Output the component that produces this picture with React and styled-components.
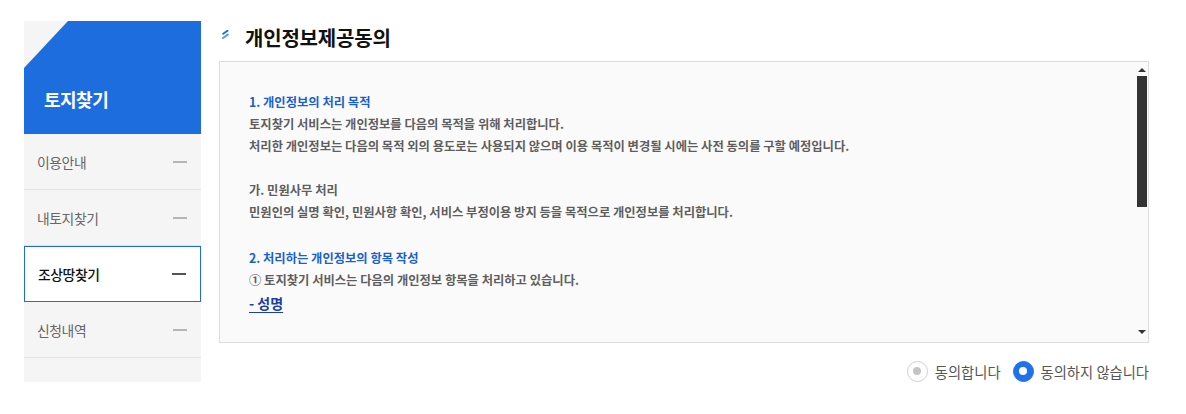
import React from "react";
import styled, { createGlobalStyle } from "styled-components";

const GlobalStyle = createGlobalStyle`
  * { box-sizing: border-box; }
  html, body { margin: 0; padding: 0; background: #fff; }
  body { font-family: "Noto Sans CJK KR", "Noto Sans", sans-serif; color: #555; }
`;

const Page = styled.div`
  display: flex;
  align-items: flex-start;
  gap: 18px;
  padding: 21px 0 0 24px;
  width: 1186px;
`;

const Sidebar = styled.nav`
  width: 177px;
  background: #f5f5f5;
  padding-bottom: 24px;
`;

const SideHeader = styled.div`
  height: 113px;
  background: #1e6ddf;
  clip-path: polygon(44px 0, 100% 0, 100% 100%, 0 100%, 0 47px);
  display: flex;
  align-items: flex-end;
  padding: 0 0 22px 20px;
  color: #fff;
  font-size: 18px;
  font-weight: 700;
  letter-spacing: -0.5px;
`;

const MenuList = styled.ul`
  list-style: none;
  margin: 0;
  padding: 0;
`;

const MenuItem = styled.li`
  height: 56px;
  display: flex;
  align-items: center;
  justify-content: space-between;
  padding: 0 14px 0 13px;
  font-size: 13.8px;
  letter-spacing: -0.4px;
  color: ${(p) => (p.$active ? "#111" : "#666")};
  font-weight: ${(p) => (p.$active ? 500 : 400)};
  background: ${(p) => (p.$active ? "#fff" : "transparent")};
  border: ${(p) => (p.$active ? "1px solid #1e6ddf" : "none")};
  border-bottom: ${(p) => (p.$active ? "1px solid #1e6ddf" : "1px solid #e3e3e3")};
`;

const Dash = styled.span`
  width: 14px;
  height: 2px;
  background: ${(p) => (p.$active ? "#555" : "#b5b5b5")};
`;

const Content = styled.section`
  width: 930px;
  display: flex;
  flex-direction: column;
`;

const TitleRow = styled.h2`
  margin: 0;
  height: 40px;
  display: flex;
  align-items: center;
  gap: 16px;
  padding: 0 0 7px 2px;
  font-size: 20px;
  font-weight: 700;
  color: #111;
  letter-spacing: -0.2px;
`;

const IconWrap = styled.span`
  display: flex;
  margin-bottom: 6px;
`;

const Box = styled.div`
  height: 282px;
  border: 1px solid #ddd;
  background: #fafafa;
  display: flex;
`;

const Viewport = styled.div`
  flex: 1;
  margin: 29px 0 0 29px;
  height: 226px;
  overflow: hidden;
`;

const Section = styled.div`
  margin-bottom: ${(p) => p.$gap || "22px"};
`;

const Heading = styled.p`
  margin: 0;
  line-height: 22px;
  font-size: 12.3px;
  font-weight: 700;
  color: #1a5fcc;
`;

const Line = styled.p`
  margin: 0;
  line-height: 22px;
  font-size: 12.3px;
  font-weight: 700;
  color: #5e5e5e;
`;

const ItemLink = styled.p`
  margin: 0;
  line-height: 24px;
  font-size: 14px;
  font-weight: 700;
  color: #1a3fa8;
  text-decoration: underline;
  text-underline-offset: 3px;
`;

const ScrollBar = styled.div`
  width: 14px;
  display: flex;
  flex-direction: column;
  align-items: center;
  padding: 4px 0 4px 1px;
`;

const Arrow = styled.div`
  width: 0;
  height: 0;
  border-left: 4px solid transparent;
  border-right: 4px solid transparent;
  ${(p) =>
    p.$down
      ? "border-top: 4px solid #333; margin-top: auto; margin-bottom: 4px;"
      : "border-bottom: 4px solid #333; margin-top: 2px;"}
`;

const Thumb = styled.div`
  width: 10px;
  height: 131px;
  background: #333;
  margin-top: 4px;
`;

const RadioRow = styled.div`
  display: flex;
  justify-content: flex-end;
  align-items: center;
  gap: 12px;
  margin-top: 17px;
  height: 22px;
`;

const RadioLabel = styled.label`
  display: flex;
  align-items: center;
  gap: 7px;
  font-size: 14.3px;
  color: #555;
  cursor: pointer;
`;

const RadioCircle = styled.span`
  width: 21px;
  height: 21px;
  border-radius: 50%;
  display: flex;
  align-items: center;
  justify-content: center;
  background: ${(p) => (p.$checked ? "#1f72ea" : "#fff")};
  border: 1px solid ${(p) => (p.$checked ? "#1f72ea" : "#d0d0d0")};
  &::after {
    content: "";
    width: 8px;
    height: 8px;
    border-radius: 50%;
    background: ${(p) => (p.$checked ? "#fff" : "#c4c4c4")};
  }
`;

const TitleIcon = () => (
  <IconWrap>
    <svg width="8" height="9" viewBox="0 0 8 9">
      <path d="M6.5 0.8 L2.2 3.8" stroke="#1e6ddf" strokeWidth="2" strokeLinecap="round" />
      <path d="M6.8 4.6 L2 8" stroke="#5b9bef" strokeWidth="2" strokeLinecap="round" />
    </svg>
  </IconWrap>
);

const menu = [
  { label: "이용안내" },
  { label: "내토지찾기" },
  { label: "조상땅찾기", active: true },
  { label: "신청내역" },
];

export default function App() {
  const [agree, setAgree] = React.useState(false);
  return (
    <>
      <GlobalStyle />
      <Page>
        <Sidebar>
          <SideHeader>토지찾기</SideHeader>
          <MenuList>
            {menu.map((m) => (
              <MenuItem key={m.label} $active={m.active}>
                {m.label}
                <Dash $active={m.active} />
              </MenuItem>
            ))}
          </MenuList>
        </Sidebar>
        <Content>
          <TitleRow>
            <TitleIcon />
            개인정보제공동의
          </TitleRow>
          <Box>
            <Viewport>
              <Section>
                <Heading>1. 개인정보의 처리 목적</Heading>
                <Line>토지찾기 서비스는 개인정보를 다음의 목적을 위해 처리합니다.</Line>
                <Line>
                  처리한 개인정보는 다음의 목적 외의 용도로는 사용되지 않으며 이용 목적이 변경될 시에는 사전 동의를 구할 예정입니다.
                </Line>
              </Section>
              <Section $gap="24px">
                <Line>가. 민원사무 처리</Line>
                <Line>민원인의 실명 확인, 민원사항 확인, 서비스 부정이용 방지 등을 목적으로 개인정보를 처리합니다.</Line>
              </Section>
              <Section>
                <Heading>2. 처리하는 개인정보의 항목 작성</Heading>
                <Line>① 토지찾기 서비스는 다음의 개인정보 항목을 처리하고 있습니다.</Line>
                <ItemLink>- 성명</ItemLink>
              </Section>
            </Viewport>
            <ScrollBar>
              <Arrow />
              <Thumb />
              <Arrow $down />
            </ScrollBar>
          </Box>
          <RadioRow>
            <RadioLabel onClick={() => setAgree(true)}>
              <RadioCircle $checked={agree} />
              동의합니다
            </RadioLabel>
            <RadioLabel onClick={() => setAgree(false)}>
              <RadioCircle $checked={!agree} />
              동의하지 않습니다
            </RadioLabel>
          </RadioRow>
        </Content>
      </Page>
    </>
  );
}
